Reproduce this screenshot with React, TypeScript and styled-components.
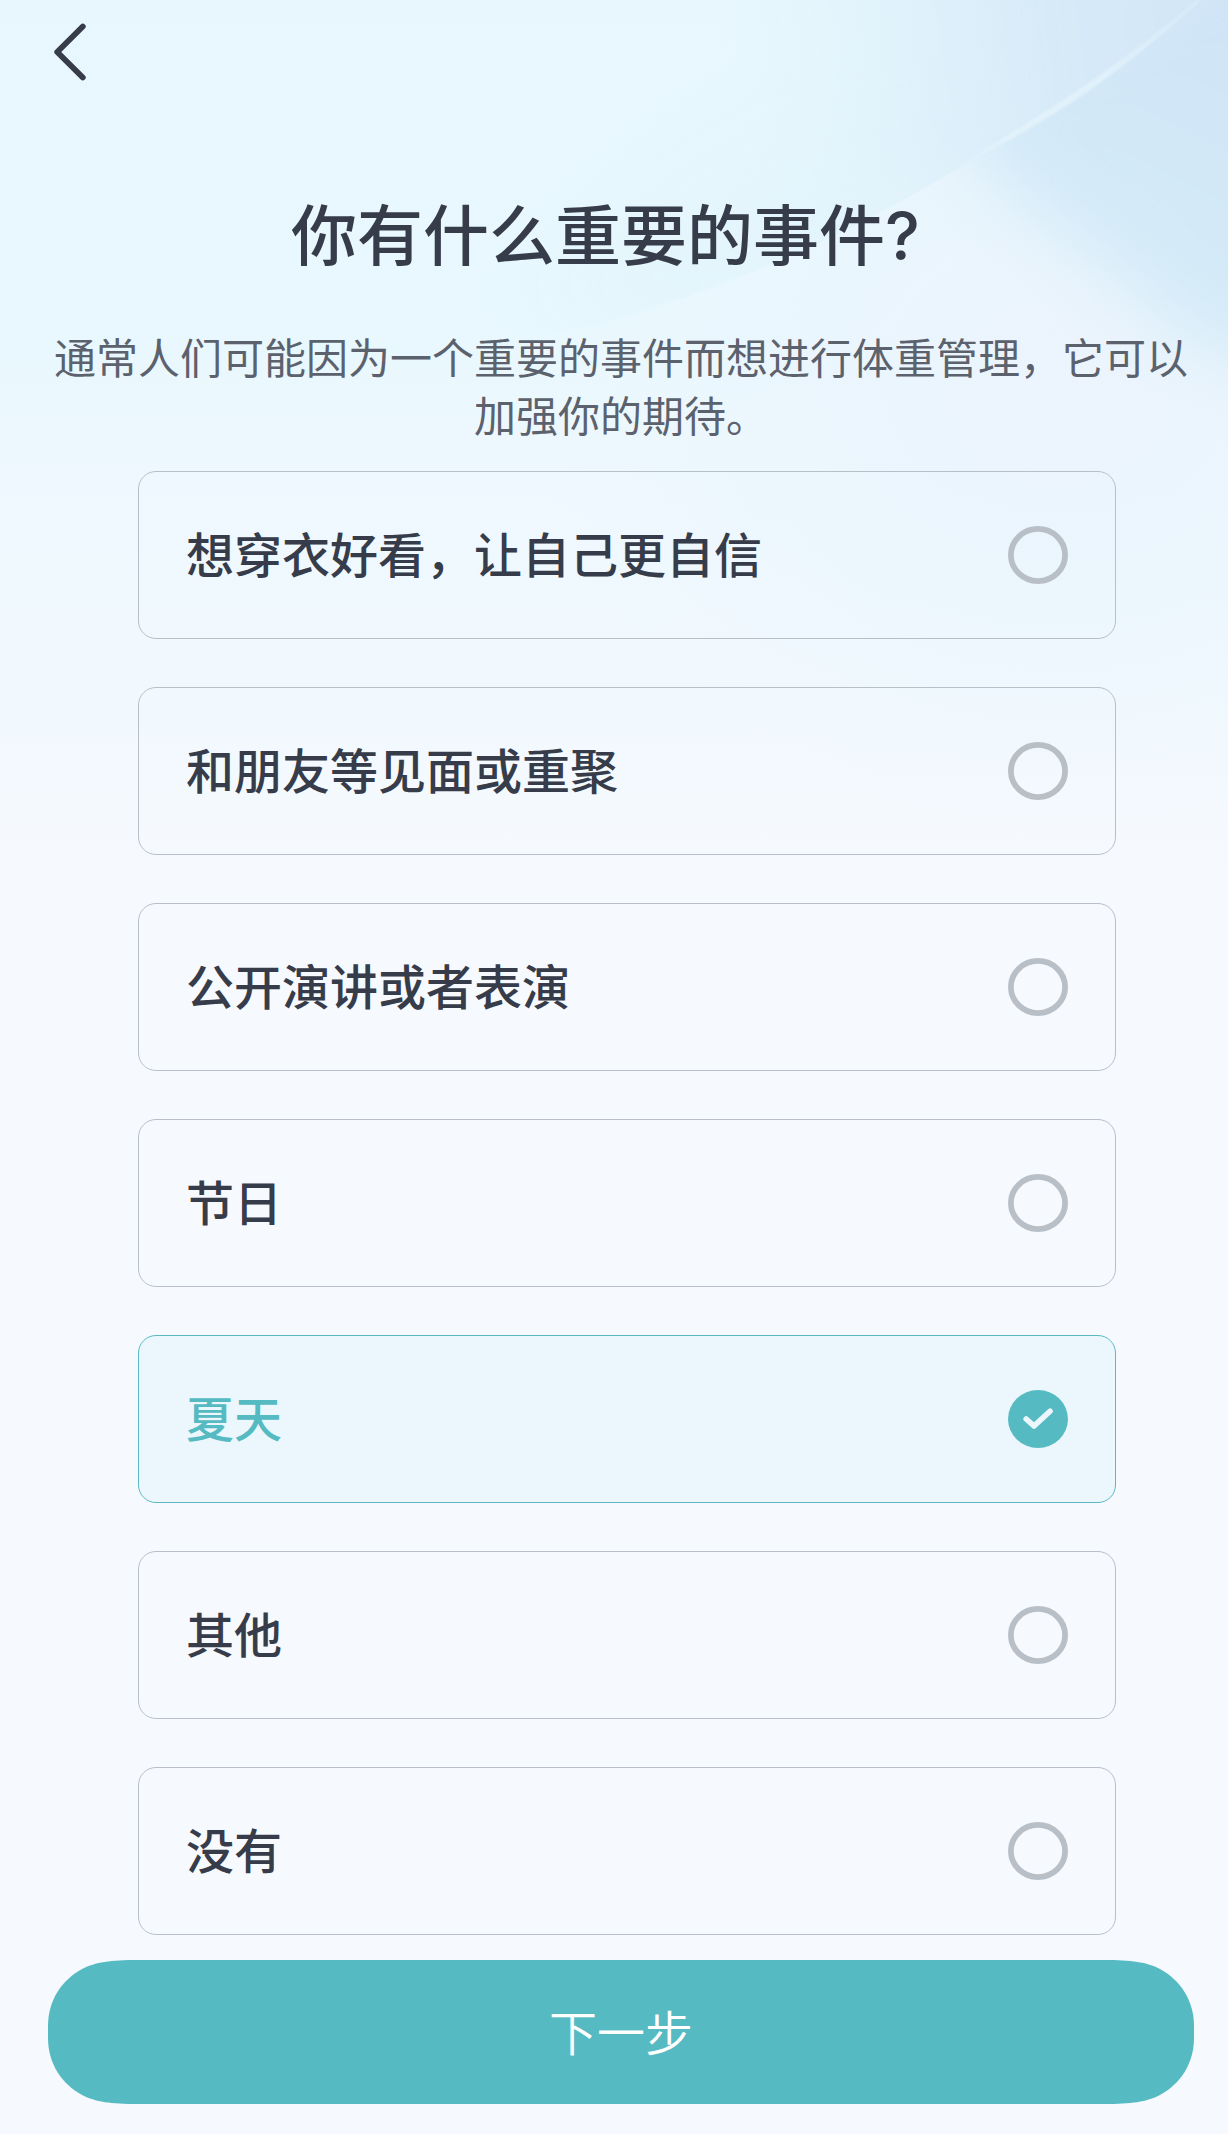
import React, { useState } from "react";
import styled, { createGlobalStyle } from "styled-components";

const GlobalStyle = createGlobalStyle`
  body { margin: 0; background: #f6f9fe; }
  *, *::before, *::after { box-sizing: border-box; }
`;

const Screen = styled.main`
  position: relative;
  display: flex;
  flex-direction: column;
  width: 1228px;
  height: 2134px;
  overflow: hidden;
  font-family: Inter, "Noto Sans CJK SC", sans-serif;
  color: #363c49;
  background: linear-gradient(180deg, #e7f7fd 0, #e8f8fe 320px, #eef8fe 480px, #f1f9fe 690px, #f6f9fe 860px);
`;

const Backdrop = styled.svg`
  position: absolute;
  inset: 0 0 auto 0;
  width: 1228px;
  height: 900px;
  pointer-events: none;
`;

const TopBar = styled.header`
  position: relative;
  display: flex;
  height: 104px;
  padding-left: 46px;
  align-items: center;
`;

const BackButton = styled.button`
  display: flex;
  padding: 0;
  border: 0;
  background: none;
  color: #363c49;
`;

const Intro = styled.section`
  position: relative;
  display: flex;
  flex-direction: column;
  height: 367px;
  padding-top: 84px;
`;

const Title = styled.h1`
  margin: 0;
  padding-right: 17px;
  font-size: 66px;
  font-weight: 500;
  line-height: 96px;
  text-align: center;
  white-space: nowrap;
`;

const Hint = styled.p`
  width: 1134px;
  margin: 43px 0 0 54px;
  font-family: "Noto Sans CJK SC", sans-serif;
  font-size: 42px;
  font-weight: 400;
  line-height: 58px;
  text-align: center;
  color: #5c626d;
`;

const Options = styled.div`
  position: relative;
  display: flex;
  flex-direction: column;
  gap: 48px;
  margin: 0 112px 0 138px;
`;

const Option = styled.button<{ $selected: boolean }>`
  display: flex;
  align-items: center;
  justify-content: space-between;
  height: 168px;
  padding: 0 47px;
  border: 1px solid ${(p) => (p.$selected ? "#5bbac3" : "#b9bfc8")};
  border-radius: 18px;
  background: ${(p) => (p.$selected ? "#ebf7fc" : "transparent")};
  color: ${(p) => (p.$selected ? "#56bac3" : "#363c49")};
  font-family: "Noto Sans CJK SC", sans-serif;
  font-size: 48px;
  font-weight: 500;
  line-height: 72px;
  text-align: left;
`;

const Label = styled.span`
  padding-bottom: 6px;
`;

const Mark = styled.svg`
  display: block;
  width: 60px;
  height: 58px;
`;

const NextButton = styled.button`
  position: relative;
  display: flex;
  align-items: center;
  justify-content: center;
  width: 1146px;
  height: 144px;
  margin: 25px 0 0 48px;
  padding: 0 0 4px;
  border: 0;
  background: #56bac3;
  clip-path: path("M0 66C0 40 14 20 34 9C48 2 62 0 90 0H1056C1084 0 1098 2 1112 9C1132 20 1146 40 1146 66V78C1146 104 1132 124 1112 135C1098 142 1084 144 1056 144H90C62 144 48 142 34 135C14 124 0 104 0 78Z");
  color: #fff;
  font-family: "Noto Sans CJK SC", sans-serif;
  font-size: 48px;
  font-weight: 350;
  line-height: 72px;
`;

const choices = [
  "想穿衣好看，让自己更自信",
  "和朋友等见面或重聚",
  "公开演讲或者表演",
  "节日",
  "夏天",
  "其他",
  "没有",
];

function Sky() {
  return (
    <Backdrop viewBox="0 0 1228 900" aria-hidden="true">
      <defs>
        <linearGradient id="upper" gradientUnits="userSpaceOnUse" x1="760" y1="60" x2="1228" y2="0">
          <stop offset="0" stopColor="#e0f2fb" stopOpacity="0" />
          <stop offset=".3" stopColor="#deF0fa" stopOpacity=".75" />
          <stop offset=".55" stopColor="#d8ebf8" />
          <stop offset="1" stopColor="#d1e6f7" />
        </linearGradient>
        <linearGradient id="shade" gradientUnits="userSpaceOnUse" x1="690" y1="120" x2="780" y2="270">
          <stop offset="0" stopColor="#e1f3fb" stopOpacity="0" />
          <stop offset="1" stopColor="#e1f3fb" stopOpacity=".85" />
        </linearGradient>
        <linearGradient id="deep" gradientUnits="userSpaceOnUse" x1="1228" y1="20" x2="1080" y2="330">
          <stop offset="0" stopColor="#cfe4f6" />
          <stop offset=".4" stopColor="#d2e8f7" />
          <stop offset="1" stopColor="#d5ecf8" />
        </linearGradient>
        <radialGradient id="glow" gradientUnits="userSpaceOnUse" cx="0" cy="0" r="1" gradientTransform="translate(1060 380) scale(540 440)">
          <stop offset="0" stopColor="#ecf4fd" />
          <stop offset=".4" stopColor="#eaf5fd" stopOpacity=".9" />
          <stop offset="1" stopColor="#edf7fd" stopOpacity="0" />
        </radialGradient>
        <linearGradient id="streak" gradientUnits="userSpaceOnUse" x1="940" y1="180" x2="1200" y2="0">
          <stop offset="0" stopColor="#e8f5fd" stopOpacity="0" />
          <stop offset=".3" stopColor="#e4f3fb" stopOpacity=".85" />
          <stop offset=".6" stopColor="#e2f2fb" stopOpacity=".85" />
          <stop offset="1" stopColor="#dcedfa" stopOpacity=".45" />
        </linearGradient>
        <filter id="soft" x="-40%" y="-40%" width="180%" height="180%" colorInterpolationFilters="sRGB">
          <feGaussianBlur stdDeviation="32" />
        </filter>
        <filter id="fine" x="-10%" y="-10%" width="120%" height="120%" colorInterpolationFilters="sRGB">
          <feGaussianBlur stdDeviation="1" />
        </filter>
        <clipPath id="above">
          <path d="M0 0H1200C1150 45 1090 90 1037 121C1000 144 940 180 882 212C810 250 720 290 600 325L0 450Z" />
        </clipPath>
        <clipPath id="below">
          <path d="M1200 0C1150 45 1090 90 1037 121C1000 144 940 180 882 212C810 250 720 290 600 325L0 450V900H1228V0Z" />
        </clipPath>
      </defs>
      <g clipPath="url(#above)">
        <path d="M640 330L520 300L700 100H1060V180L880 250Z" fill="url(#shade)" filter="url(#soft)" />
        <path d="M740 -120H1340V60L1080 210L850 190Z" fill="url(#upper)" filter="url(#soft)" />
      </g>
      <g clipPath="url(#below)">
        <rect width="1228" height="900" fill="url(#glow)" />
        <path d="M1240 -80L940 110L1010 195L1110 270L1190 340L1330 390V-80Z" fill="url(#deep)" filter="url(#soft)" />
      </g>
      <path d="M1201 0C1151 46 1091 92 1038 123C1005 143 975 158 945 174C975 155 1005 138 1034 119C1088 86 1148 42 1197 0Z" fill="url(#streak)" stroke="url(#streak)" strokeWidth="1" filter="url(#fine)" />
    </Backdrop>
  );
}

function OptionMark({ selected }: { selected: boolean }) {
  return (
    <Mark viewBox="0 0 60 58" aria-hidden="true">
      {selected ? (
        <>
          <ellipse cx="30" cy="29" rx="30" ry="29" fill="#56bac3" />
          <path d="M18.2 29L26 36L42 21.2" fill="none" stroke="#ebf7fc" strokeWidth="5.6" strokeLinecap="round" strokeLinejoin="round" />
        </>
      ) : (
        <ellipse cx="30" cy="29" rx="27.1" ry="26.1" fill="none" stroke="#b9bfc7" strokeWidth="5.8" />
      )}
    </Mark>
  );
}

export default function App() {
  const [selected, setSelected] = useState("夏天");
  return (
    <Screen>
      <GlobalStyle />
      <Sky />
      <TopBar>
        <BackButton aria-label="返回">
          <svg width="48" height="72" viewBox="0 0 48 72">
            <path d="M36.8 10.5L11.2 36L36.8 61.5" fill="none" stroke="currentColor" strokeWidth="5.8" strokeLinecap="round" strokeLinejoin="round" />
          </svg>
        </BackButton>
      </TopBar>
      <Intro>
        <Title>你有什么重要的事件?</Title>
        <Hint>通常人们可能因为一个重要的事件而想进行体重管理，它可以加强你的期待。</Hint>
      </Intro>
      <Options role="radiogroup">
        {choices.map((choice) => (
          <Option
            key={choice}
            role="radio"
            aria-checked={choice === selected}
            $selected={choice === selected}
            onClick={() => setSelected(choice)}
          >
            <Label>{choice}</Label>
            <OptionMark selected={choice === selected} />
          </Option>
        ))}
      </Options>
      <NextButton>下一步</NextButton>
    </Screen>
  );
}
